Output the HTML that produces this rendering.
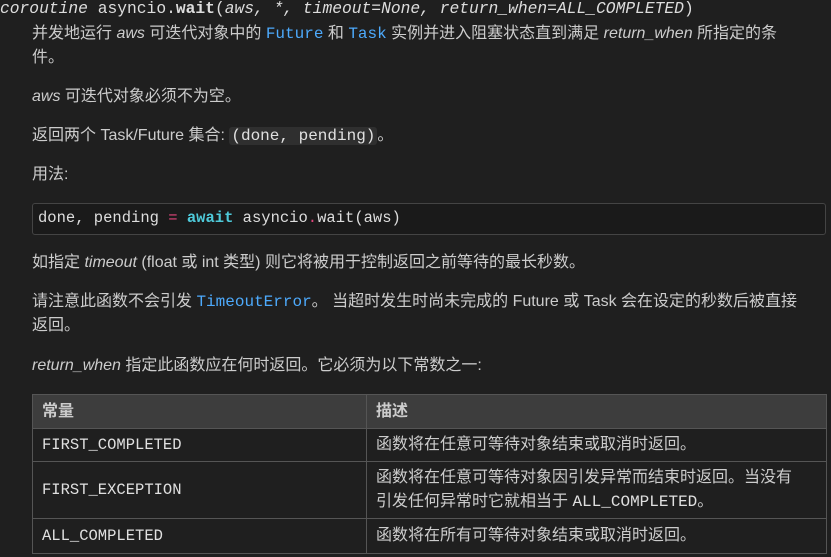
<!DOCTYPE html>
<html><head><meta charset="utf-8"><style>
body{margin:0;width:831px;height:557px;background:#1f1f1f;color:#cccccc;font-family:"Liberation Sans","Noto Sans CJK SC",sans-serif;font-size:16px;overflow:hidden;position:relative}
.a{position:absolute;white-space:nowrap;line-height:24px}
.m{font-family:"Liberation Mono","Noto Sans CJK SC",monospace;color:#e0e0e0}
.bl{color:#4daafc}
i{font-style:italic}
.ic{background:#2f2f2f;border-radius:3px;padding:0 2px}
table{position:absolute;left:32px;top:394px;width:795px;border-collapse:collapse;font-size:16px}
td,th{border:1px solid #555;padding:0 9px;text-align:left;line-height:24px}
th{background:#3d3d3d;height:33px;font-weight:bold}
</style></head><body>
<div class="a m" style="left:0;top:-3px;font-size:16.3px;color:#ddd"><i>coroutine</i> asyncio.<b>wait</b>(<i>aws, *, timeout=None, return_when=ALL_COMPLETED</i>)</div>
<div class="a" style="left:32px;top:22px">并发地运行 <i>aws</i> 可迭代对象中的 <span class="m bl">Future</span> 和 <span class="m bl">Task</span> 实例并进入阻塞状态直到满足 <i>return_when</i> 所指定的条</div>
<div class="a" style="left:32px;top:46px">件。</div>
<div class="a" style="left:32px;top:85px"><i>aws</i> 可迭代对象必须不为空。</div>
<div class="a" style="left:32px;top:124px">返回两个 Task/Future 集合: <span class="m ic">(done, pending)</span>。</div>
<div class="a" style="left:32px;top:163px">用法:</div>
<div style="position:absolute;left:32px;top:203px;width:792px;height:30px;border:1px solid #444;border-radius:3px;background:#1a1a1a"></div>
<div class="a m" style="left:38px;top:206px;font-size:15.5px;color:#ddd">done, pending <span style="color:#e0457b">=</span> <b style="color:#4ec9d9">await</b> asyncio<span style="color:#e0457b">.</span>wait(aws)</div>
<div class="a" style="left:32px;top:251px">如指定 <i>timeout</i> (float 或 int 类型) 则它将被用于控制返回之前等待的最长秒数。</div>
<div class="a" style="left:32px;top:290px">请注意此函数不会引发 <span class="m bl">TimeoutError</span>。 当超时发生时尚未完成的 Future 或 Task 会在设定的秒数后被直接</div>
<div class="a" style="left:32px;top:314px">返回。</div>
<div class="a" style="left:32px;top:354px"><i>return_when</i> 指定此函数应在何时返回。它必须为以下常数之一:</div>
<table>
<tr><th style="width:315px">常量</th><th>描述</th></tr>
<tr style="height:33px"><td class="m" style="font-size:15.5px">FIRST_COMPLETED</td><td>函数将在任意可等待对象结束或取消时返回。</td></tr>
<tr style="height:57px"><td class="m" style="font-size:15.5px">FIRST_EXCEPTION</td><td>函数将在任意可等待对象因引发异常而结束时返回。当没有<br>引发任何异常时它就相当于 <span class="m">ALL_COMPLETED</span>。</td></tr>
<tr style="height:35px"><td class="m" style="font-size:15.5px">ALL_COMPLETED</td><td>函数将在所有可等待对象结束或取消时返回。</td></tr>
</table>
</body></html>
